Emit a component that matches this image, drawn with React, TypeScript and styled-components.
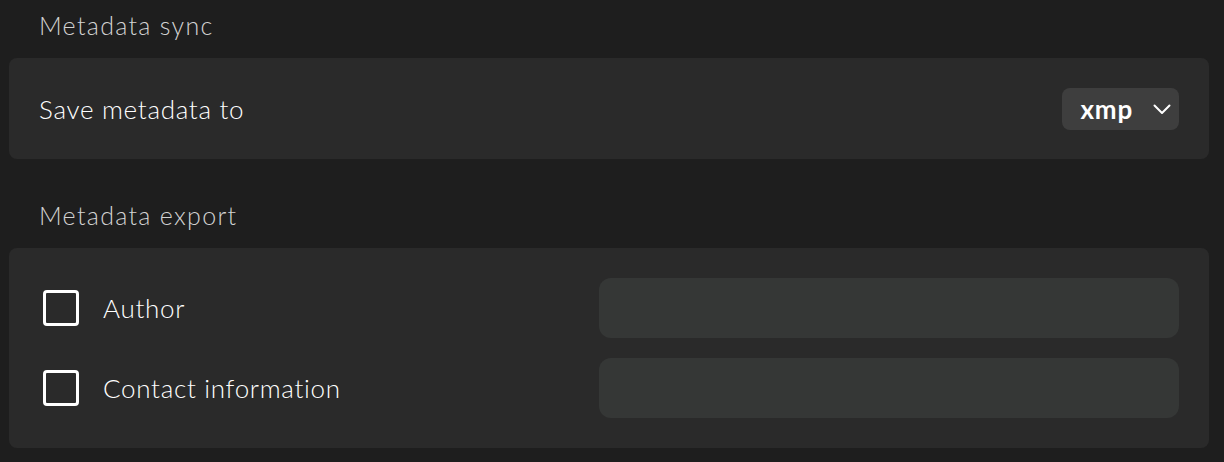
import React, { useState } from 'react';
import styled, { createGlobalStyle } from 'styled-components';

const GlobalStyle = createGlobalStyle`
  body {
    margin: 0;
    background-color: #1e1e1e;
    font-family: Lato, "Noto Sans", sans-serif;
    color: #f5f5f5;
  }
`;

const Page = styled.div`
  width: 1224px;
  padding: 0 15px 0 9px;
  box-sizing: border-box;
`;

const SectionTitle = styled.h3`
  margin: 0;
  padding: 0 30px;
  height: 58px;
  line-height: 50px;
  font-size: 25px;
  font-weight: 300;
  letter-spacing: 1.3px;
  color: #d2d2d2;
`;

const Card = styled.div<{ $pad: number }>`
  background-color: #2a2a2a;
  border-radius: 8px;
  padding: ${(p) => p.$pad}px 30px;
  display: flex;
  flex-direction: column;
  gap: 20px;
`;

const Row = styled.div<{ $height: number }>`
  display: flex;
  align-items: center;
  justify-content: space-between;
  height: ${(p) => p.$height}px;
`;

const Label = styled.span`
  font-size: 26px;
  font-weight: 300;
  letter-spacing: 0.7px;
  color: #ffffff;
`;

const Select = styled.button`
  display: flex;
  align-items: center;
  gap: 20px;
  height: 42px;
  padding: 0 8px 0 18px;
  border: none;
  border-radius: 8px;
  background-color: #3e3e3e;
  color: #ffffff;
  font-family: inherit;
  font-size: 26px;
  font-weight: 700;
  letter-spacing: 0.8px;
  svg {
    margin-top: 1px;
  }
`;

const Spacer = styled.div`
  height: 31px;
`;

const CheckLabel = styled.label`
  display: flex;
  align-items: center;
  gap: 24px;
  margin-left: 4px;
  cursor: pointer;
`;

const Box = styled.span<{ $checked: boolean }>`
  width: 36px;
  height: 36px;
  box-sizing: border-box;
  border: 3px solid #ffffff;
  border-radius: 4px;
  background-color: ${(p) => (p.$checked ? '#ffffff' : 'transparent')};
`;

const TextInput = styled.input`
  width: 580px;
  height: 60px;
  box-sizing: border-box;
  border: none;
  border-radius: 12px;
  background-color: #353736;
  color: #ffffff;
  padding: 0 18px;
  font-family: inherit;
  font-size: 22px;
  outline: none;
`;

const Chevron = () => (
  <svg width="18" height="11" viewBox="0 0 18 11" fill="none">
    <polyline points="1.5,1.5 9,9 16.5,1.5" stroke="#ffffff" strokeWidth="2" strokeLinecap="round" strokeLinejoin="round" />
  </svg>
);

const fields = ['Author', 'Contact information'];

const App = () => {
  const [checked, setChecked] = useState<Record<string, boolean>>({});

  return (
    <>
      <GlobalStyle />
      <Page>
        <SectionTitle>Metadata sync</SectionTitle>
        <Card $pad={0}>
          <Row $height={101}>
            <Label>Save metadata to</Label>
            <Select>
              xmp
              <Chevron />
            </Select>
          </Row>
        </Card>
        <Spacer />
        <SectionTitle>Metadata export</SectionTitle>
        <Card $pad={30}>
          {fields.map((f) => (
            <Row key={f} $height={60}>
              <CheckLabel onClick={() => setChecked({ ...checked, [f]: !checked[f] })}>
                <Box $checked={!!checked[f]} />
                <Label>{f}</Label>
              </CheckLabel>
              <TextInput />
            </Row>
          ))}
        </Card>
      </Page>
    </>
  );
};

export default App;
